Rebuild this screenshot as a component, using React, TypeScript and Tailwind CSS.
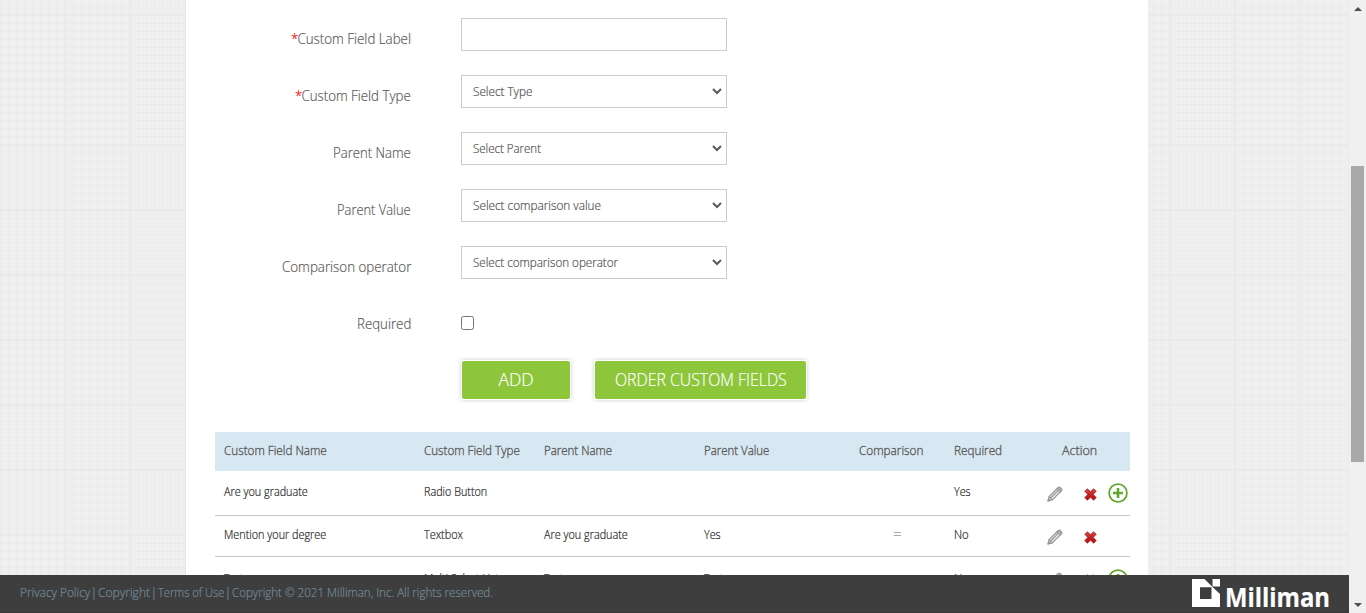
import { useLayoutEffect, useRef, type ReactNode } from "react";

/** Single line of text condensed horizontally so that it spans `w` pixels. */
function Line({ w, className = "", children }: { w: number; className?: string; children: ReactNode }) {
  const ref = useRef<HTMLSpanElement>(null);
  useLayoutEffect(() => {
    const el = ref.current;
    if (!el) return;
    el.style.transform = `scaleX(${w / el.offsetWidth})`;
  }, [w]);
  return (
    <span className={`inline-block text-left align-top whitespace-nowrap ${className}`} style={{ width: w }}>
      <span ref={ref} className="inline-block origin-left">
        {children}
      </span>
    </span>
  );
}

const fields = [
  { label: "Custom Field Label", lw: 120, required: true },
  { label: "Custom Field Type", lw: 116, required: true, value: "Select Type", vw: 59 },
  { label: "Parent Name", lw: 78, value: "Select Parent", vw: 68 },
  { label: "Parent Value", lw: 74, value: "Select comparison value", vw: 128 },
  { label: "Comparison operator", lw: 129, value: "Select comparison operator", vw: 145 },
];

const Pencil = () => (
  <svg width="16" height="16" viewBox="0 0 16 16" fill="none" stroke="#949494" strokeWidth="1.1" strokeLinejoin="round">
    <path d="M1 15 2 10.6 11.2 1.5Q12.2.6 13.2 1.5L14.5 2.8Q15.4 3.8 14.5 4.8L5.3 13.9Z" fill="#e4e4e4" />
    <path d="M2 10.6 5.3 13.9M3.7 11.8 11.4 4.2M10 2.7l3.4 3.4M11.2 1.6l3.3 3.3" />
    <path d="m1 15 .5-2 1.5 1.5Z" fill="#949494" />
  </svg>
);

const Cross = () => (
  <svg width="13" height="13" viewBox="0 0 13 13">
    <defs>
      <linearGradient id="red" x1="0" y1="0" x2="0" y2="1">
        <stop offset="0" stopColor="#d9504f" />
        <stop offset=".45" stopColor="#c42426" />
        <stop offset="1" stopColor="#b80d10" />
      </linearGradient>
    </defs>
    <path
      d="M3.3.8 6.5 3.6 9.7.8 12.2 3.3 9.2 6.4l3 3.2-2.5 2.6-3.2-3-3.2 3L.8 9.6l3-3.2-3-3.1Z"
      fill="url(#red)"
      stroke="#b01a1c"
      strokeWidth=".8"
      strokeLinejoin="round"
    />
  </svg>
);

const Plus = () => (
  <svg width="20" height="20" viewBox="0 0 20 20" fill="none" stroke="#62a830">
    <circle cx="10" cy="10" r="8.9" strokeWidth="1.8" />
    <path d="M10 5v10M5 10h10" strokeWidth="2.6" />
  </svg>
);

type Cell = [string, number] | null;
const rows: { cells: Cell[]; plus: boolean; height: string; top: string; iconTop: string }[] = [
  {
    cells: [["Are you graduate", 84], ["Radio Button", 63], null, null, null, ["Yes", 17]],
    plus: true,
    height: "h-[45px]",
    top: "pt-[11px]",
    iconTop: "pt-[12px]",
  },
  {
    cells: [["Mention your degree", 102], ["Textbox", 39], ["Are you graduate", 84], ["Yes", 17], ["=", 9], ["No", 15]],
    plus: false,
    height: "h-[41px]",
    top: "pt-[9px]",
    iconTop: "pt-[10px]",
  },
  {
    cells: [["Test", 20], ["Multi Select List", 75], ["Test", 20], ["Test", 20], null, ["No", 15]],
    plus: true,
    height: "h-[45px]",
    top: "pt-[12px]",
    iconTop: "pt-[12px]",
  },
];

const cols = "grid grid-cols-[200px_120px_160px_155px_95px_102px_83px]";

const headers: [string, number][] = [
  ["Custom Field Name", 103],
  ["Custom Field Type", 96],
  ["Parent Name", 68],
  ["Parent Value", 65],
  ["Comparison", 64],
  ["Required", 48],
];

const links: [string, number][] = [
  ["Privacy Policy", 70],
  ["|", 8],
  ["Copyright", 52],
  ["|", 8],
  ["Terms of Use", 66],
  ["|", 8],
  ["Copyright © 2021 Milliman, Inc. All rights reserved.", 261],
];

export default function App() {
  return (
    <div className="flex h-[613px] w-[1366px] overflow-hidden bg-[#f0f0f0] font-['Open_Sans',sans-serif] font-light [-webkit-text-stroke:0.2px]">
      <div className="flex w-[1349px] flex-col">
        <main className="h-[575px] overflow-hidden bg-[#efefef] bg-[image:repeating-linear-gradient(90deg,#eaeaea_0_1px,transparent_1px_8px),repeating-linear-gradient(180deg,#eaeaea_0_1px,transparent_1px_8px)] bg-[length:65px_65px] bg-[position:0_15px] pl-[185px]">
          <div className="h-full w-[963px] border-l border-[#e6e6e6] bg-white bg-clip-padding pl-[29px] pt-[18px]">
            <form className="h-[414px]">
              {fields.map((f) => (
                <div key={f.label} className="flex h-[57px]">
                  <div className="w-[196px] pt-[8px] text-right text-[15px] leading-6 text-[#5a5a5a]">
                    <Line w={f.lw}>
                      {f.required && <span className="-mr-px text-[#ff0000]">*</span>}
                      {f.label}
                    </Line>
                  </div>
                  <div className="ml-[50px] flex h-[33px] w-[266px] items-center justify-between border border-[#ccc] pl-[10.5px] pr-[4px] text-[12.5px] leading-5 text-[#505050]">
                    {f.value && (
                      <>
                        <Line w={f.vw ?? 0}>{f.value}</Line>
                        <svg className="mb-[2px]" width="10" height="8" viewBox="0 0 10 8" fill="none" stroke="#5a5a5a" strokeWidth="2">
                          <path d="m1 2 4 4 4-4" />
                        </svg>
                      </>
                    )}
                  </div>
                </div>
              ))}
              <div className="flex h-[58px]">
                <div className="w-[196px] pt-[8px] text-right text-[15px] leading-6 text-[#5a5a5a]">
                  <Line w={54}>Required</Line>
                </div>
                <div className="ml-[50px] mt-[13px] h-[14px] w-[13px] rounded-[2.5px] border border-[#767676] bg-white" />
              </div>
              <div className="ml-[247px] flex gap-[25px] text-[17.5px] leading-[36px] text-white">
                <div className="h-[38px] w-[108px] rounded-[2px] bg-[#8dc63a] text-center shadow-[0_0_0_1px_#fff,0_0_4px_1px_#ccc]">
                  <Line w={35}>ADD</Line>
                </div>
                <div className="h-[38px] w-[211px] rounded-[2px] bg-[#8dc63a] text-center shadow-[0_0_0_1px_#fff,0_0_4px_1px_#ccc]">
                  <Line w={172}>ORDER CUSTOM FIELDS</Line>
                </div>
              </div>
            </form>
            <section className="w-[915px]">
              <div className={`${cols} h-[39px] bg-[#d8e8f2] pt-[9px] text-[12.5px] leading-5 text-[#5c5c5c] [-webkit-text-stroke:0.35px]`}>
                {headers.map(([t, w]) => (
                  <div key={t} className="pl-[9px]">
                    <Line w={w}>{t}</Line>
                  </div>
                ))}
                <div className="pl-[15px]">
                  <Line w={35}>Action</Line>
                </div>
              </div>
              {rows.map((r, i) => (
                <div key={i} className={`${cols} ${r.height} border-b border-[#c8c8c8] text-[12px] leading-5 text-[#222]`}>
                  {r.cells.map((c, j) => (
                    <div key={j} className={j === 4 ? `pl-[43px] text-[#666] ${r.top}` : `pl-[9px] ${r.top}`}>
                      {c && <Line w={c[1]}>{c[0]}</Line>}
                    </div>
                  ))}
                  <div className={`flex items-start ${r.iconTop}`}>
                    <div className="mt-[3px]">
                      <Pencil />
                    </div>
                    <div className="ml-[21px] mt-[5px]">
                      <Cross />
                    </div>
                    {r.plus && (
                      <div className="ml-[11px]">
                        <Plus />
                      </div>
                    )}
                  </div>
                </div>
              ))}
            </section>
          </div>
        </main>
        <footer className="flex h-[38px] justify-between border-b border-[#383838] bg-[#3e3e3e] pl-5 pr-[19px] text-[12.5px] text-[#738c99]">
          <div className="flex pt-[8px] leading-5">
            {links.map(([t, w], i) =>
              t === "|" ? (
                <span key={i} className="w-2 text-center">
                  |
                </span>
              ) : (
                <Line key={i} w={w}>
                  {t}
                </Line>
              ),
            )}
          </div>
          <div className="flex pt-1 text-white">
            <svg width="28" height="28" viewBox="0 0 28 28" fill="#fff">
              <path fillRule="evenodd" d="M0 0H12.5L20 7.5 28 15V28H0ZM8 8.3V20H19.5V8.3Z" />
              <path d="M20.5 0H28V7.5H20.5Z" />
            </svg>
            <Line w={105} className="-mt-px ml-[5px] text-[27px] leading-[37px] font-bold">
              Milliman
            </Line>
          </div>
        </footer>
      </div>
      <div className="flex w-[17px] flex-col items-center justify-between pt-[7px] pb-[6px]">
        <svg width="8" height="4" viewBox="0 0 8 4" fill="#505050">
          <path d="M4 0 8 4H0Z" />
        </svg>
        <div className="mt-[13px] h-[296px] w-[13px] bg-[#a8a8a8]" />
        <svg width="8" height="4" viewBox="0 0 8 4" fill="#505050">
          <path d="M0 0H8L4 4Z" />
        </svg>
      </div>
    </div>
  );
}
